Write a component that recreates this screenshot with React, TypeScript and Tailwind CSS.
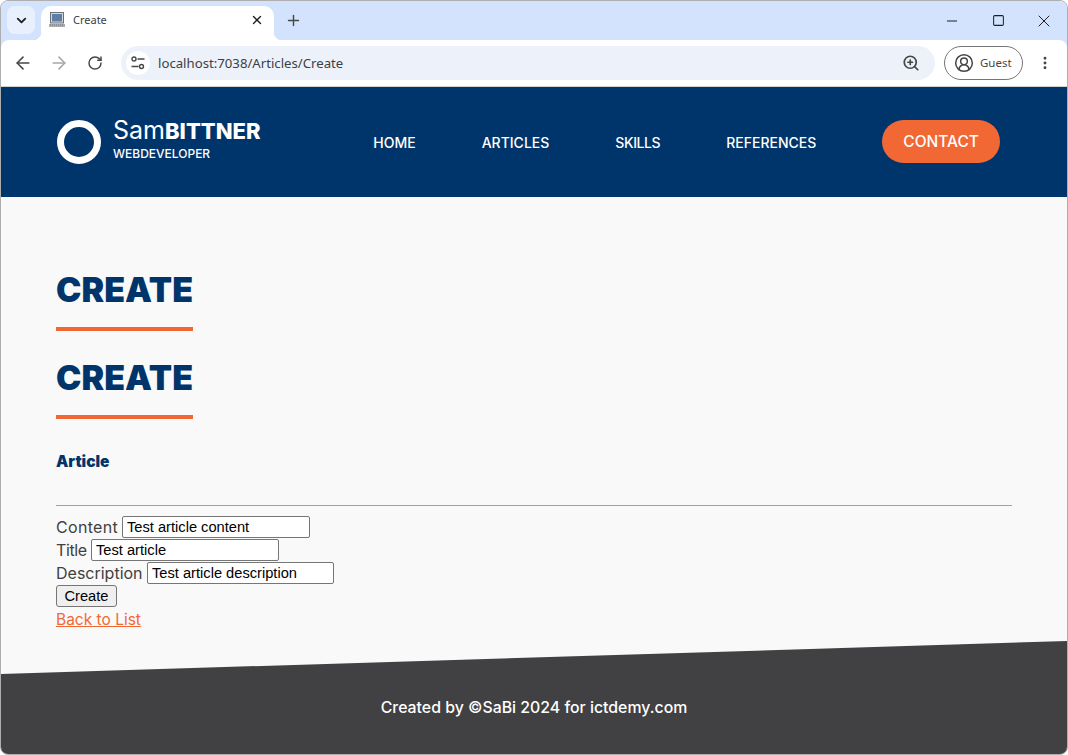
import { ArrowLeft, ArrowRight, ChevronDown, Plus, RotateCw, X, Minus, Square, EllipsisVertical, ZoomIn, CircleUserRound } from "lucide-react";

const NAV = [
  { label: "HOME", className: "" },
  { label: "ARTICLES", className: "" },
  { label: "SKILLS", className: "tracking-[-0.4px]" },
  { label: "REFERENCES", className: "" },
];

function Laptop() {
  return (
    <svg width="16" height="16" viewBox="0 0 16 16" className="shrink-0">
      <rect x="1.5" y="0.5" width="13" height="10.5" fill="#d5d8dc" stroke="#6b7078" />
      <rect x="3" y="2" width="10" height="7.5" fill="#5d7fa6" />
      <path d="M0 12h16v3H0z" fill="#a9adb2" />
      <path d="M1 13h14" stroke="#70747a" strokeDasharray="1 1" />
    </svg>
  );
}

function SiteControls() {
  return (
    <svg width="14" height="14" viewBox="0 0 14 14" fill="none" stroke="#474747" strokeWidth="1.4">
      <circle cx="3" cy="3" r="2" />
      <path d="M6.5 3H13.5" />
      <path d="M0.5 10.5H7.5" />
      <circle cx="10.5" cy="10.5" r="2" />
    </svg>
  );
}

function BrowserChrome() {
  return (
    <div className="shrink-0 bg-[#d3e3fd] font-['Noto_Sans',sans-serif]">
      <div className="flex h-[39px] items-end pl-[6px]">
        <div className="mb-[6px] flex h-7 w-7 items-center justify-center rounded-lg bg-[#e8f0fe]">
          <ChevronDown size={15} strokeWidth={3} className="text-[#1f1f1f]" />
        </div>
        <div className="relative ml-[6px] flex h-[34px] w-[233px] items-center rounded-t-[10px] bg-white pb-[6px] pl-[8px] pr-[10px]">
          <div className="absolute bottom-0 left-[-8px] h-2 w-2 bg-[radial-gradient(circle_at_0_0,transparent_8px,white_8.5px)]" />
          <Laptop />
          <span className="ml-[8px] flex-1 text-[11px] text-[#3c4043]">Create</span>
          <X size={14} strokeWidth={2.4} className="text-[#1f1f1f]" />
          <div className="absolute bottom-0 right-[-8px] h-2 w-2 bg-[radial-gradient(circle_at_100%_0,transparent_8px,white_8.5px)]" />
        </div>
        <div className="mb-[6px] ml-[5px] flex h-7 w-7 items-center justify-center">
          <Plus size={17} strokeWidth={2} className="text-[#444746]" />
        </div>
        <div className="ml-auto flex items-center self-center text-[#1f1f1f]">
          <div className="flex w-[46px] justify-center">
            <Minus size={16} strokeWidth={1.5} />
          </div>
          <div className="flex w-[46px] justify-center">
            <Square size={13} strokeWidth={1.9} />
          </div>
          <div className="flex w-[46px] justify-center">
            <X size={20} strokeWidth={1.2} />
          </div>
        </div>
      </div>
      <div className="flex h-[47px] items-center rounded-t-[8px] border-b border-[#d0d0d0] bg-white pl-[4px] pr-[14px]">
        <div className="flex w-9 justify-center">
          <ArrowLeft size={20} strokeWidth={1.9} className="text-[#474747]" />
        </div>
        <div className="flex w-9 justify-center">
          <ArrowRight size={20} strokeWidth={1.9} className="text-[#a8a8a8]" />
        </div>
        <div className="flex w-9 justify-center">
          <RotateCw size={16} strokeWidth={2.2} className="text-[#474747]" />
        </div>
        <div className="ml-[8px] flex h-[34px] w-[814px] items-center rounded-full bg-[#edf2fa] pl-[5px] pr-[15px]">
          <div className="flex h-[24px] w-[24px] items-center justify-center rounded-full bg-white">
            <SiteControls />
          </div>
          <span className="ml-[8px] flex-1 pt-px text-[13.2px] text-[#3c4043]">localhost:7038/Articles/Create</span>
          <ZoomIn size={18} strokeWidth={2.3} className="text-[#474747]" />
        </div>
        <div className="ml-[9px] flex h-[34px] w-[79px] items-center rounded-full border border-[#747775] pl-[9px]">
          <CircleUserRound size={20} strokeWidth={1.8} className="text-[#474747]" />
          <span className="ml-[6px] text-[11.5px] text-[#474747]">Guest</span>
        </div>
        <EllipsisVertical size={16} strokeWidth={2.4} className="ml-auto text-[#474747]" />
      </div>
    </div>
  );
}

function Heading() {
  return (
    <div className="w-fit">
      <h1 className="text-[34px] font-black leading-[53px] text-[#00356b]">CREATE</h1>
      <div className="mt-[11px] h-1 bg-[#f26835]" />
    </div>
  );
}

function Field({ label, value, labelClass, inputWidth }: { label: string; value: string; labelClass: string; inputWidth: string }) {
  return (
    <div className="flex h-[22px] items-center gap-[4px]">
      <label className={`${labelClass} whitespace-nowrap pb-px text-[16px]`}>{label}</label>
      <input
        readOnly
        value={value}
        className={`${inputWidth} h-[22px] rounded-[2px] border border-[#767676] bg-white px-1 font-['Liberation_Sans',sans-serif] text-[14.667px] text-black`}
      />
    </div>
  );
}

export default function App() {
  return (
    <div className="flex h-[755px] w-[1068px] flex-col overflow-hidden rounded-lg border border-[#aeaeae] bg-[#f9f9f9] font-['Inter',sans-serif]">
      <BrowserChrome />
      <header className="flex h-[110px] shrink-0 items-center bg-[#00356b] pl-[56px] pr-[67px] text-white">
        <div className="h-[44px] w-[44px] rounded-full border-[7px] border-white" />
        <div className="ml-[12px] flex flex-col pb-[4px]">
          <div className="text-[22px] leading-[27px]">
            <span className="text-[25px]">Sam</span>
            <span className="font-extrabold">BITTNER</span>
          </div>
          <div className="text-[12px] font-medium leading-[18px]">WEBDEVELOPER</div>
        </div>
        <nav className="ml-auto flex items-center gap-[66px] text-[14px] font-medium">
          {NAV.map(item => (
            <span key={item.label} className={item.className}>
              {item.label}
            </span>
          ))}
          <span className="mb-px flex h-[43px] items-center rounded-full bg-[#f26835] px-[21px] text-[15.5px]">CONTACT</span>
        </nav>
      </header>
      <main className="flex-1 px-[55px] pt-[66px] text-[#414042]">
        <Heading />
        <div className="mt-[20px]">
          <Heading />
        </div>
        <h4 className="mt-[31px] text-[15.5px] font-black leading-[24px] text-[#00356b]">Article</h4>
        <hr className="mt-[31px] border-[#a0a0a0]" />
        <div className="mt-[10px] flex w-fit flex-col gap-[1px]">
          <Field label="Content" value="Test article content" labelClass="w-[62px] tracking-[0.3px]" inputWidth="w-[188px]" />
          <Field label="Title" value="Test article" labelClass="w-[31px] tracking-[-0.4px]" inputWidth="w-[188px]" />
          <Field label="Description" value="Test article description" labelClass="w-[87px]" inputWidth="w-[187px]" />
          <button className="h-[22px] w-[61px] rounded-[3px] border border-[#767676] bg-[#efefef] font-['Liberation_Sans',sans-serif] text-[14.667px] leading-none text-black">
            Create
          </button>
          <a className="pt-px text-[15.5px] leading-[22px] text-[#f26835] underline">Back to List</a>
        </div>
      </main>
      <footer className="flex h-[113px] shrink-0 items-center justify-center bg-[#414042] pt-[21px] text-[15.85px] font-medium text-white [clip-path:polygon(0_33px,100%_0,100%_100%,0_100%)]">
        Created by ©SaBi 2024 for ictdemy.com
      </footer>
    </div>
  );
}
